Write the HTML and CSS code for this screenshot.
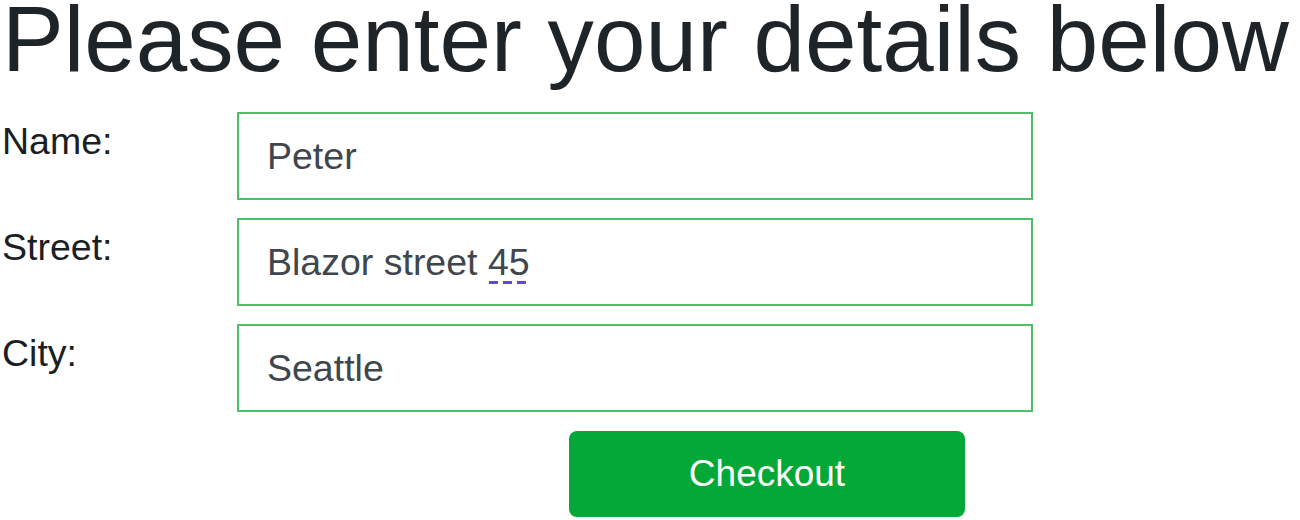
FILE: index.html
```html
<!DOCTYPE html>
<html>
<head>
<meta charset="utf-8">
<link rel="stylesheet" href="styles.css">
</head>
<body>
<h1 class="title">Please enter your details below</h1>
<form class="form">
  <div class="row">
    <label class="label">Name:</label>
    <input class="field" type="text" value="Peter">
  </div>
  <div class="row">
    <label class="label">Street:</label>
    <div class="field-wrap">
      <input class="field" type="text" value="Blazor street 45" spellcheck="false">
      <span class="squiggle"></span>
    </div>
  </div>
  <div class="row">
    <label class="label">City:</label>
    <input class="field" type="text" value="Seattle">
  </div>
  <div class="actions">
    <button class="btn" type="button">Checkout</button>
  </div>
</form>
</body>
</html>
```
FILE: styles.css
```css
html, body {
  margin: 0;
  padding: 0;
  background: #ffffff;
  font-family: "Liberation Sans", Arial, sans-serif;
  color: #212529;
}
.title {
  margin: 0 0 34px 0;
  padding-left: 2px;
  font-size: 92.6px;
  font-weight: 400;
  line-height: 78px;
  color: #1f2429;
  white-space: nowrap;
}
.form {
  display: flex;
  flex-direction: column;
  gap: 18px;
}
.row {
  display: grid;
  grid-template-columns: 237px 796px;
  align-items: start;
}
.label {
  font-size: 37.5px;
  line-height: 57px;
  padding-top: 1px;
  padding-left: 2px;
  color: #1b1e22;
}
.field-wrap {
  position: relative;
}
.field {
  box-sizing: border-box;
  width: 796px;
  height: 88px;
  margin: 0;
  padding: 0 0 0 28px;
  border: 2px solid #4cbf68;
  border-radius: 0;
  outline: none;
  font-family: "Liberation Sans", Arial, sans-serif;
  font-size: 37.5px;
  color: #3f464d;
  background: #ffffff;
}
.squiggle {
  position: absolute;
  left: 252px;
  top: 63px;
  width: 40px;
  height: 3px;
  background: repeating-linear-gradient(90deg, #6347cc 0 9px, transparent 9px 14px);
}
.actions {
  display: flex;
  padding-left: 569px;
  padding-top: 1px;
}
.btn {
  width: 396px;
  height: 86px;
  border: none;
  border-radius: 8px;
  background: #03a836;
  color: #ffffff;
  font-family: "Liberation Sans", Arial, sans-serif;
  font-size: 37px;
  padding: 0;
  cursor: pointer;
}
```
